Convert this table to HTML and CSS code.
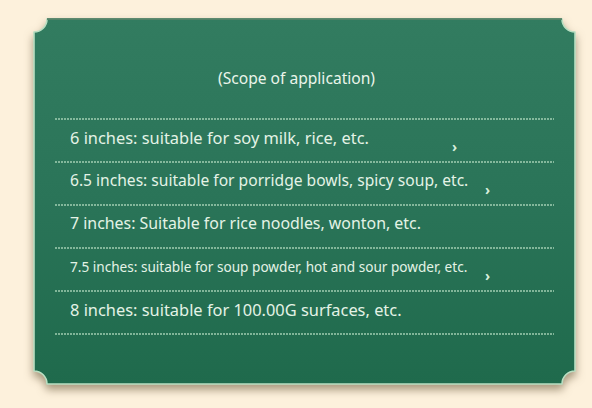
FILE: index.html
```html
<!DOCTYPE html>
<html>
<head>
<meta charset="utf-8">
<link rel="stylesheet" href="styles.css">
</head>
<body>
<div class="card">
  <svg class="card-bg" viewBox="0 0 543 367" preserveAspectRatio="none" aria-hidden="true">
    <defs>
      <linearGradient id="g" x1="0" y1="0" x2="0" y2="1">
        <stop offset="0" stop-color="#327c60"/>
        <stop offset="0.5" stop-color="#2a7458"/>
        <stop offset="1" stop-color="#1f6a4c"/>
      </linearGradient>
    </defs>
    <path d="M14 1 H529 A13 13 0 0 0 542 14 V353 A13 13 0 0 0 529 366 H14 A13 13 0 0 0 1 353 V14 A13 13 0 0 0 14 1 Z" fill="url(#g)" stroke="#b9dfc2" stroke-width="1.6" stroke-linejoin="round"/>
    <path d="M14 1 H529" stroke="#3b6c52" stroke-width="1.4" fill="none"/>
  </svg>
  <div class="content">
    <div class="title">(Scope of application)</div>
    <div class="dots"></div>
    <div class="row"><span class="txt r1">6 inches: suitable for soy milk, rice, etc.</span><span class="mark m1">›</span></div>
    <div class="dots"></div>
    <div class="row"><span class="txt r2">6.5 inches: suitable for porridge bowls, spicy soup, etc.</span><span class="mark m2">›</span></div>
    <div class="dots"></div>
    <div class="row"><span class="txt r3">7 inches: Suitable for rice noodles, wonton, etc.</span></div>
    <div class="dots"></div>
    <div class="row"><span class="txt r4">7.5 inches: suitable for soup powder, hot and sour powder, etc.</span><span class="mark m2">›</span></div>
    <div class="dots"></div>
    <div class="row"><span class="txt r5">8 inches: suitable for 100.00G surfaces, etc.</span></div>
    <div class="dots"></div>
  </div>
</div>
</body>
</html>
```
FILE: styles.css
```css
html, body {
  margin: 0;
  padding: 0;
}
body {
  width: 592px;
  height: 408px;
  background: #fdf1dc;
  font-family: "Noto Sans", "Open Sans", sans-serif;
  color: #e4f3e6;
  overflow: hidden;
}
.card {
  position: relative;
  width: 543px;
  height: 367px;
  margin: 18px 0 0 33px;
}
.card-bg {
  position: absolute;
  left: 0;
  top: 0;
  width: 543px;
  height: 367px;
  overflow: visible;
  filter: drop-shadow(0 5px 4px rgba(80, 62, 30, 0.5));
}
.content {
  position: relative;
  padding: 0 22px;
  display: flex;
  flex-direction: column;
}
.title {
  padding: 50px 16px 30px 0;
  line-height: 20px;
  height: 20px;
  text-align: center;
  font-size: 15.6px;
  color: #eaf5ea;
}
.dots {
  height: 2px;
  background: repeating-linear-gradient(to right, rgba(190, 228, 200, 0.6) 0 1.6px, transparent 1.6px 3px);
}
.row {
  height: 41px;
  display: flex;
  align-items: center;
  padding: 0 0 7px 15px;
  box-sizing: border-box;
}
.row:last-of-type {
  padding-bottom: 5px;
}
.txt {
  flex: none;
  font-size: 16px;
  white-space: nowrap;
}
.r1 { font-size: 16.4px; }
.r2 { font-size: 15.6px; }
.r3 { font-size: 15.9px; }
.r4 { font-size: 13.6px; }
.r5 { font-size: 16.4px; }
.mark {
  flex: none;
  margin-left: auto;
  align-self: flex-end;
  font-size: 14px;
  line-height: 12px;
  font-weight: bold;
  color: #d9efdc;
  margin-bottom: 1px;
}
.m1 { margin-right: 97px; }
.m2 { margin-right: 64px; }
```
